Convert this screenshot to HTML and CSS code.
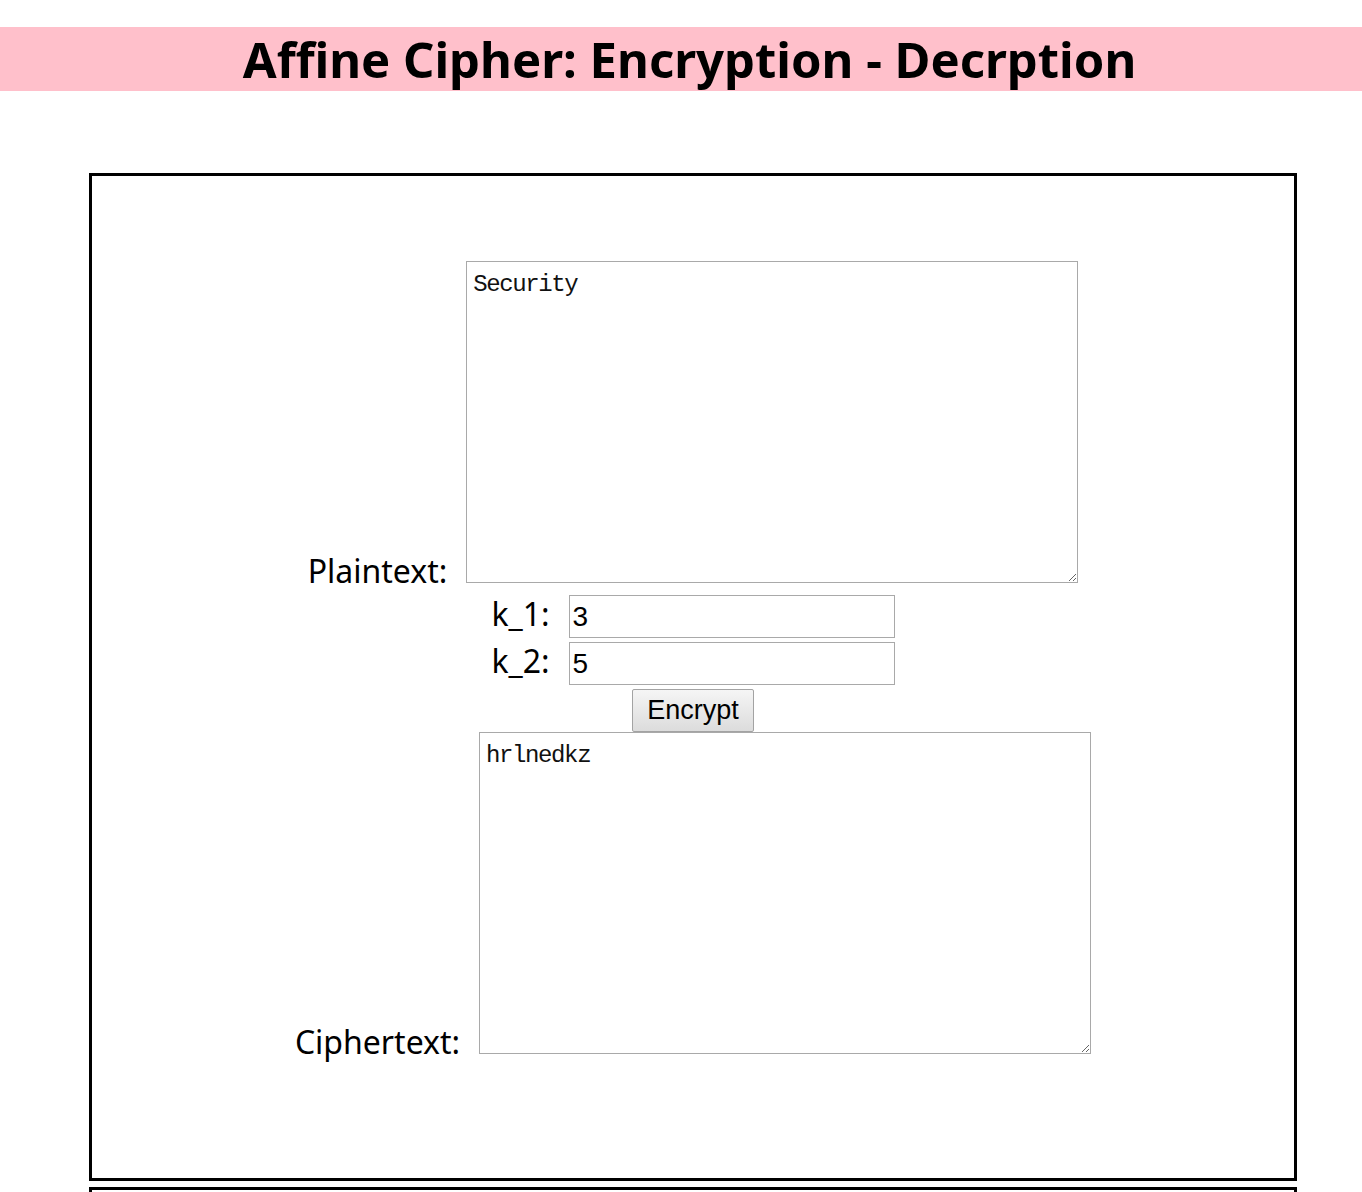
FILE: index.html
```html
<!DOCTYPE html>
<html>
<head>
<meta charset="utf-8">
<title>Affine Cipher</title>
<link rel="stylesheet" href="styles.css">
</head>
<body>
<h1 class="title">Affine Cipher: Encryption - Decrption</h1>
<div class="panel">
  <div class="row row-plain">
    <label class="lbl lbl-text" for="pt">Plaintext:</label><textarea id="pt" class="area">Security</textarea>
  </div>
  <div class="row row-key">
    <label class="lbl lbl-key" for="k1">k_1:</label><input id="k1" class="key" type="text" value="3">
  </div>
  <div class="row row-key">
    <label class="lbl lbl-key" for="k2">k_2:</label><input id="k2" class="key" type="text" value="5">
  </div>
  <div class="row row-btn">
    <button class="btn" type="button">Encrypt</button>
  </div>
  <div class="row row-cipher">
    <label class="lbl lbl-text" for="ct">Ciphertext:</label><textarea id="ct" class="area">hrlnedkz</textarea>
  </div>
</div>
<div class="panel panel-next"></div>
</body>
</html>
```
FILE: styles.css
```css
html, body {
  margin: 0;
  padding: 0;
  background: #fff;
}
body {
  font-family: "Noto Sans", "Open Sans", sans-serif;
  color: #000;
}
.title {
  margin: 27px 0 0 0;
  padding-left: 17px;
  height: 64px;
  line-height: 64px;
  background: #ffc0cb;
  text-align: center;
  font-size: 49px;
  font-weight: 700;
  font-family: "Noto Sans", sans-serif;
}
.panel {
  box-sizing: border-box;
  width: 1208px;
  margin: 82px 0 0 89px;
  border: 3px solid #000;
  padding: 85px 0 120px 0;
}
.panel-next {
  margin-top: 6px;
  height: 200px;
  padding: 0;
}
.row {
  text-align: center;
  line-height: 1;
}
.lbl {
  font-size: 32px;
  font-family: "Noto Sans", sans-serif;
  margin-right: 19px;
}
.area {
  box-sizing: border-box;
  width: 612px;
  height: 322px;
  border: 1px solid #a9a9a9;
  padding: 9px 6px 6px 6px;
  margin: 0;
  font-family: "Liberation Mono", monospace;
  font-size: 24px;
  letter-spacing: -1.4px;
  line-height: 28px;
  color: #111;
  vertical-align: baseline;
  background: #fff;
}
.row-plain {
  margin-bottom: 8px;
}
.row-key {
  margin-bottom: 4px;
}
.key {
  box-sizing: border-box;
  width: 326px;
  height: 43px;
  border: 1px solid #a9a9a9;
  padding: 1px 3px;
  margin: 0;
  font-family: "Liberation Sans", Arial, sans-serif;
  font-size: 28px;
  color: #000;
  background: #fff;
}
.row-key .lbl {
  margin-right: 19px;
}
.btn {
  box-sizing: border-box;
  width: 122px;
  height: 43px;
  margin: 0;
  padding: 0;
  border: 1px solid #a3a3a3;
  border-radius: 2px;
  background: linear-gradient(#f5f5f5, #dcdcdc);
  font-family: "Liberation Sans", Arial, sans-serif;
  font-size: 27px;
  color: #000;
}
.row-btn {
  height: 43px;
}
```
